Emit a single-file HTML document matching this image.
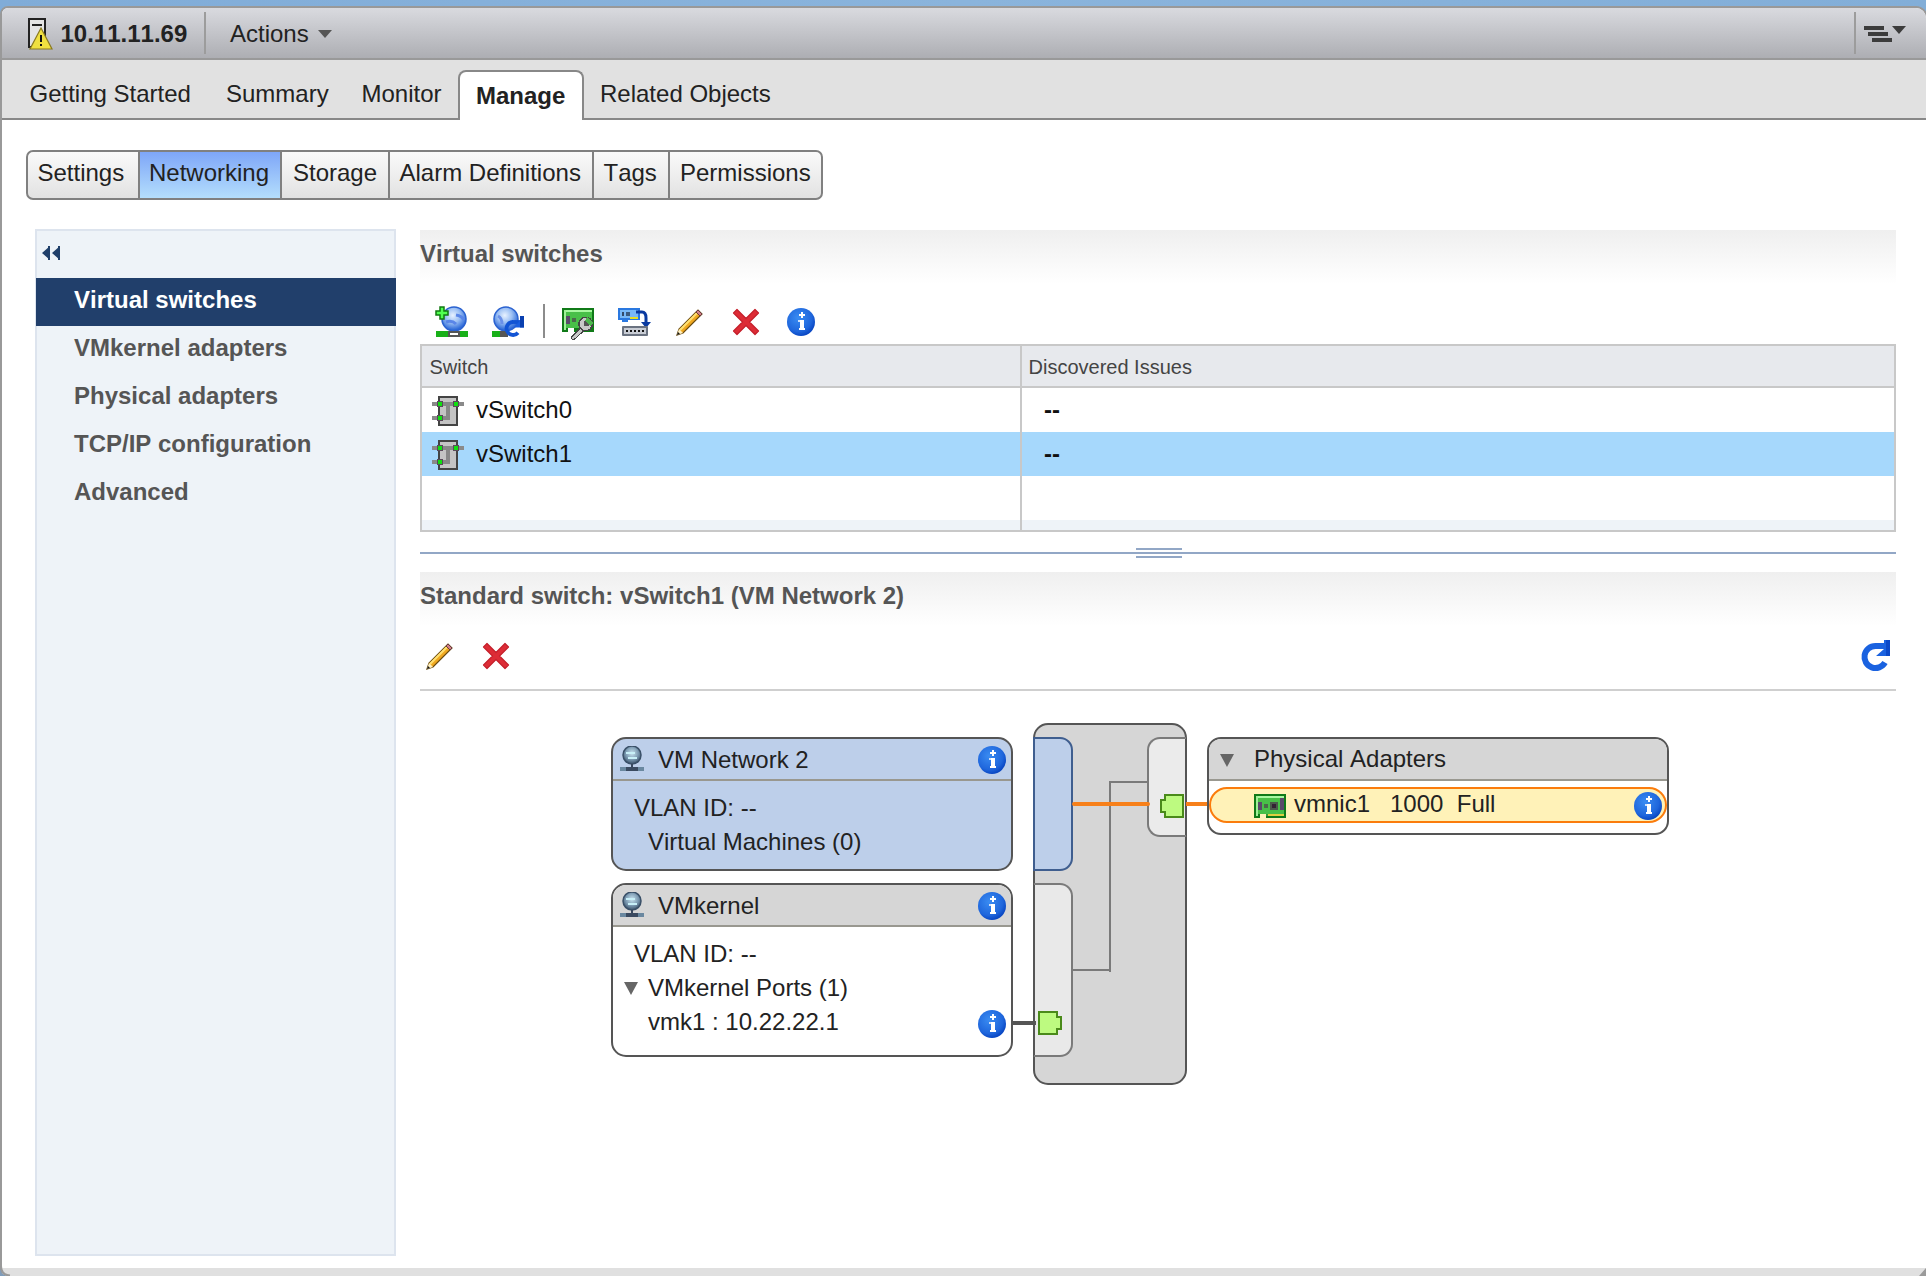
<!DOCTYPE html>
<html><head><meta charset="utf-8">
<style>
*{margin:0;padding:0;box-sizing:border-box}
html,body{width:1926px;height:1276px;overflow:hidden;background:#fff;font-family:"Liberation Sans",sans-serif;color:#222}
.a{position:absolute}
.t{position:absolute;line-height:1;white-space:nowrap;font-size:24px;font-kerning:none}
.b{font-weight:bold}
svg{position:absolute;overflow:visible}
</style></head><body>
<!-- top blue strip -->
<div class="a" style="left:0;top:0;width:1926px;height:20px;background:linear-gradient(90deg,#80acd8,#8ab4dc 50%,#82aed8)"></div>
<!-- main frame left border -->
<div class="a" style="left:0;top:6px;width:1928px;height:1290px;border:2px solid #999;border-radius:8px 12px 0 0;background:#fff"></div>
<!-- header -->
<div class="a" style="left:2px;top:8px;width:1924px;height:50px;border-radius:6px 10px 0 0;background:linear-gradient(#d9dadf,#adaeb3)"></div>
<div class="a" style="left:2px;top:58px;width:1924px;height:2px;background:#999"></div>
<div class="a" style="left:204px;top:12px;width:2px;height:42px;background:#9c9c9c"></div>
<div class="a" style="left:1854px;top:12px;width:2px;height:42px;background:#9c9c9c"></div>
<div class="t b" style="left:60.5px;top:21.5px">10.11.11.69</div>
<div class="t" style="left:230px;top:21.7px">Actions</div>
<svg style="left:318px;top:30px" width="14" height="8"><path d="M0 0H14L7 8Z" fill="#555"/></svg>
<!-- menu icon -->
<div class="a" style="left:1864px;top:26px;width:20px;height:4px;background:#3c3c3c"></div>
<div class="a" style="left:1868px;top:32px;width:20px;height:4px;background:#3c3c3c"></div>
<div class="a" style="left:1872px;top:38px;width:20px;height:4px;background:#3c3c3c"></div>
<svg style="left:1892px;top:26px" width="14" height="8"><path d="M0 0H14L7 8Z" fill="#3c3c3c"/></svg>

<!-- tab bar -->
<div class="a" style="left:2px;top:60px;width:1924px;height:58px;background:#e1e1e1"></div>
<div class="a" style="left:2px;top:118px;width:1924px;height:2px;background:#888"></div>
<div class="a" style="left:458px;top:70px;width:126px;height:50px;background:#fff;border:2px solid #888;border-bottom:none;border-radius:8px 8px 0 0"></div>
<div class="t" style="left:29.5px;top:81.7px">Getting Started</div>
<div class="t" style="left:226px;top:81.7px">Summary</div>
<div class="t" style="left:361.5px;top:81.7px">Monitor</div>
<div class="t b" style="left:476px;top:83.7px">Manage</div>
<div class="t" style="left:600px;top:81.7px">Related Objects</div>

<!-- button bar -->
<div class="a" style="left:26px;top:150px;width:797px;height:50px;border:2px solid #808080;border-radius:7px;background:linear-gradient(#fafafa,#e2e2e2);overflow:hidden">
 <div class="a" style="left:110px;top:0;width:144px;height:46px;background:linear-gradient(#7ea6f8,#b4defc);border-left:2px solid #808080;border-right:2px solid #808080"></div>
 <div class="a" style="left:360px;top:0;width:2px;height:46px;background:#808080"></div>
 <div class="a" style="left:564px;top:0;width:2px;height:46px;background:#808080"></div>
 <div class="a" style="left:640px;top:0;width:2px;height:46px;background:#808080"></div>
</div>
<div class="t" style="left:37.5px;top:160.5px">Settings</div>
<div class="t" style="left:149px;top:160.5px">Networking</div>
<div class="t" style="left:293px;top:160.5px">Storage</div>
<div class="t" style="left:399.5px;top:160.5px">Alarm Definitions</div>
<div class="t" style="left:603.5px;top:160.5px">Tags</div>
<div class="t" style="left:680px;top:160.5px">Permissions</div>

<!-- sidebar -->
<div class="a" style="left:35px;top:229px;width:361px;height:1027px;background:#eef3f8;border:2px solid #dde4ee"></div>
<div class="a" style="left:36px;top:278px;width:360px;height:48px;background:#213f6b"></div>
<svg style="left:41px;top:245px" width="21" height="16"><path d="M1 8L9 1V15Z M11 8L19 1V15Z" fill="#1f3f6a"/><rect x="7" y="1" width="2" height="14" fill="#1f3f6a"/><rect x="17" y="1" width="2" height="14" fill="#1f3f6a"/></svg>
<div class="t b" style="left:74px;top:287.7px;color:#fff">Virtual switches</div>
<div class="t b" style="left:74px;top:335.7px;color:#555">VMkernel adapters</div>
<div class="t b" style="left:74px;top:383.7px;color:#555">Physical adapters</div>
<div class="t b" style="left:74px;top:431.7px;color:#555">TCP/IP configuration</div>
<div class="t b" style="left:74px;top:479.7px;color:#555">Advanced</div>

<!-- bottom bar -->
<div class="a" style="left:2px;top:1268px;width:1924px;height:8px;background:#e0e0e0"></div>

<!-- Virtual switches header -->
<div class="a" style="left:420px;top:230px;width:1476px;height:54px;background:linear-gradient(#efefef,#fff)"></div>
<div class="t b" style="left:420px;top:241.7px;color:#555">Virtual switches</div>
<div class="a" style="left:543px;top:304px;width:2px;height:34px;background:#8c8c8c"></div>

<!-- table -->
<div class="a" style="left:420px;top:344px;width:1476px;height:188px;border:2px solid #c8c8c8;background:#fff"></div>
<div class="a" style="left:422px;top:346px;width:1472px;height:40px;background:#e7e9ed"></div>
<div class="a" style="left:422px;top:386px;width:1472px;height:2px;background:#c8c8c8"></div>
<div class="a" style="left:422px;top:432px;width:1472px;height:44px;background:#a6d8fc"></div>
<div class="a" style="left:422px;top:520px;width:1472px;height:10px;background:#eef3f8"></div>
<div class="a" style="left:1020px;top:346px;width:2px;height:184px;background:#c8c8c8"></div>
<div class="t" style="left:429.5px;top:356.5px;font-size:20px;color:#444">Switch</div>
<div class="t" style="left:1028.5px;top:356.5px;font-size:20px;color:#444">Discovered Issues</div>
<div class="t" style="left:476px;top:397.7px;color:#111">vSwitch0</div>
<div class="t" style="left:476px;top:441.7px;color:#111">vSwitch1</div>
<div class="t b" style="left:1044px;top:397.7px;color:#111">--</div>
<div class="t b" style="left:1044px;top:441.7px;color:#111">--</div>

<!-- splitter -->
<div class="a" style="left:420px;top:552px;width:1476px;height:2px;background:#92a7c6"></div>
<div class="a" style="left:1136px;top:548px;width:46px;height:2px;background:#92a7c6"></div>
<div class="a" style="left:1136px;top:556px;width:46px;height:2px;background:#92a7c6"></div>

<!-- Standard switch header -->
<div class="a" style="left:420px;top:572px;width:1476px;height:54px;background:linear-gradient(#efefef,#fff)"></div>
<div class="t b" style="left:420px;top:583.7px;color:#555">Standard switch: vSwitch1 (VM Network 2)</div>
<div class="a" style="left:420px;top:689px;width:1476px;height:2px;background:#cfcfcf"></div>

<!-- diagram: switch outer -->
<div class="a" style="left:1033px;top:723px;width:154px;height:362px;background:#d6d6d6;border:2px solid #555;border-radius:15px"></div>
<div class="a" style="left:1033px;top:737px;width:40px;height:134px;background:#bdcfea;border:2px solid #3f5e8f;border-radius:0 13px 13px 0"></div>
<div class="a" style="left:1033px;top:883px;width:40px;height:174px;background:#e9e9e9;border:2px solid #7a7a7a;border-left-color:#555;border-radius:0 13px 13px 0"></div>
<div class="a" style="left:1147px;top:737px;width:40px;height:100px;background:#ebebeb;border:2px solid #7a7a7a;border-right-color:#555;border-radius:13px 0 0 13px"></div>
<!-- gray tree lines -->
<div class="a" style="left:1109px;top:781px;width:2px;height:191px;background:#7a7a7a"></div>
<div class="a" style="left:1109px;top:781px;width:39px;height:2px;background:#7a7a7a"></div>
<div class="a" style="left:1072px;top:969px;width:39px;height:2px;background:#7a7a7a"></div>
<!-- orange lines -->
<div class="a" style="left:1072px;top:802px;width:78px;height:4px;background:#f7801a;border-radius:2px"></div>
<div class="a" style="left:1186px;top:802px;width:24px;height:4px;background:#f7801a"></div>
<!-- dark connector -->
<div class="a" style="left:1012px;top:1021px;width:24px;height:4px;background:#555"></div>
<!-- green ports -->
<svg style="left:1160px;top:794px" width="24" height="24"><path d="M5 1H23V23H5V18H1V6H5Z" fill="#bdfa80" stroke="#4a8a1a" stroke-width="2"/></svg>
<svg style="left:1038px;top:1011px" width="24" height="24"><path d="M1 1H19V6H23V18H19V23H1Z" fill="#bdfa80" stroke="#4a8a1a" stroke-width="2"/></svg>

<!-- VM Network 2 box -->
<div class="a" style="left:611px;top:737px;width:402px;height:134px;background:#bdcfea;border:2px solid #555;border-radius:15px"></div>
<div class="a" style="left:613px;top:779px;width:398px;height:2px;background:#999890"></div>
<div class="t" style="left:658px;top:747.7px">VM Network 2</div>
<div class="t" style="left:634px;top:795.7px">VLAN ID: --</div>
<div class="t" style="left:648px;top:829.7px">Virtual Machines (0)</div>

<!-- VMkernel box -->
<div class="a" style="left:611px;top:883px;width:402px;height:174px;background:#fff;border:2px solid #555;border-radius:15px;overflow:hidden"><div class="a" style="left:0;top:0;width:398px;height:42px;background:#d6d6d6;border-bottom:2px solid #999890"></div></div>
<div class="t" style="left:658px;top:893.7px">VMkernel</div>
<div class="t" style="left:634px;top:941.7px">VLAN ID: --</div>
<svg style="left:624px;top:982px" width="14" height="13"><path d="M0 0H14L7 13Z" fill="#666"/></svg>
<div class="t" style="left:648px;top:975.7px">VMkernel Ports (1)</div>
<div class="t" style="left:648px;top:1009.7px">vmk1 : 10.22.22.1</div>

<!-- Physical adapters box -->
<div class="a" style="left:1207px;top:737px;width:462px;height:98px;background:#fff;border:2px solid #555;border-radius:14px;overflow:hidden"><div class="a" style="left:0;top:0;width:458px;height:42px;background:#d6d6d6;border-bottom:2px solid #999890"></div></div>
<svg style="left:1220px;top:754px" width="14" height="13"><path d="M0 0H14L7 13Z" fill="#666"/></svg>
<div class="t" style="left:1254px;top:746.7px">Physical Adapters</div>
<div class="a" style="left:1209px;top:787px;width:458px;height:36px;background:#fff2b8;border:2.5px solid #fb7c0c;border-radius:18px"></div>
<div class="t" style="left:1294px;top:791.8px;white-space:pre">vmnic1   1000  Full</div>

<!-- ICON DEFS -->
<svg width="0" height="0" style="left:0;top:0">
<defs>
 <radialGradient id="gInfo" cx="40%" cy="35%" r="65%"><stop offset="0" stop-color="#3a8cf2"/><stop offset="0.75" stop-color="#1f66dc"/><stop offset="1" stop-color="#0a48c4"/></radialGradient>
 <radialGradient id="gGlobe" cx="45%" cy="35%" r="60%"><stop offset="0" stop-color="#e8f2ff"/><stop offset="0.5" stop-color="#9cc0f4"/><stop offset="1" stop-color="#2e6ad8"/></radialGradient>
 <radialGradient id="gGlobe2" cx="50%" cy="40%" r="60%"><stop offset="0" stop-color="#c8e4f0"/><stop offset="0.6" stop-color="#7a98b0"/><stop offset="1" stop-color="#3a5068"/></radialGradient>
 <symbol id="info" viewBox="0 0 28 28">
  <circle cx="14" cy="14" r="14" fill="url(#gInfo)"/>
  <rect x="12" y="6" width="6" height="2" fill="#fff"/><rect x="14" y="4" width="2" height="6" fill="#fff"/>
  <rect x="13" y="12" width="4" height="9" fill="#fff"/><rect x="11" y="12" width="2" height="2" fill="#cfe0fa"/><rect x="12" y="20" width="6" height="2" fill="#fff"/>
 </symbol>
 <symbol id="pencil" viewBox="0 0 28 28">
  <path d="M1 27 L3 21 L22 2 L26 6 L7 25 Z" fill="#f0a820" stroke="#6a4a10" stroke-width="1.2"/>
  <path d="M4 22 L21 5" stroke="#ffe070" stroke-width="2.2"/>
  <path d="M20 4 L22 2 L26 6 L24 8 Z" fill="#d08088" stroke="#6a3a3a" stroke-width="1"/>
  <path d="M1 27 L3 21 L7 25 Z" fill="#fff0c0"/><path d="M1 27 L2 24 L4 26Z" fill="#111"/>
 </symbol>
 <symbol id="xred" viewBox="0 0 28 28">
  <path d="M1.5 5 L5 1.5 L14 10.5 L23 1.5 L26.5 5 L17.5 14 L26.5 23 L23 26.5 L14 17.5 L5 26.5 L1.5 23 L10.5 14 Z" fill="#dd2c36" stroke="#c41e2a" stroke-width="1.2" stroke-linejoin="round"/>
 </symbol>
 <symbol id="sw" viewBox="0 0 16 16" shape-rendering="crispEdges">
  <rect x="3" y="1" width="10" height="15" fill="#444"/><rect x="4" y="2" width="8" height="13" fill="#c4c4c4"/>
  <rect x="5" y="4" width="6" height="2" fill="#888"/><rect x="7" y="6" width="2" height="7" fill="#888"/><rect x="5" y="11" width="4" height="2" fill="#888"/>
  <rect x="0" y="4" width="3" height="2" fill="#8a8a8a"/><rect x="13" y="4" width="3" height="2" fill="#8a8a8a"/><rect x="0" y="11" width="3" height="2" fill="#8a8a8a"/>
  <rect x="2.5" y="3.5" width="3" height="3" fill="#5a4a5a"/><rect x="10.5" y="3.5" width="3" height="3" fill="#5a4a5a"/><rect x="2.5" y="10.5" width="3" height="3" fill="#5a4a5a"/>
  <rect x="3" y="4" width="2" height="2" fill="#10e010"/><rect x="11" y="4" width="2" height="2" fill="#10e010"/><rect x="3" y="11" width="2" height="2" fill="#10e010"/>
 </symbol>
 <symbol id="nic" viewBox="0 0 16 12" shape-rendering="crispEdges">
  <path d="M0 0H16V12H6V10H3V12H0Z" fill="#107a18"/>
  <rect x="1" y="1" width="14" height="9" fill="#48c048"/><rect x="6" y="10" width="9" height="1" fill="#3a9a30"/>
  <rect x="1" y="1" width="14" height="1" fill="#a8f8a0"/><rect x="1" y="1" width="1" height="10" fill="#a0f098"/>
  <rect x="2" y="4" width="2" height="4" fill="#5a4a6a"/><rect x="5" y="5" width="2" height="2" fill="#4a6a4a"/>
  <rect x="8" y="4" width="4" height="4" fill="#4a5a4a"/><rect x="9" y="5" width="2" height="2" fill="#332233"/><rect x="13" y="2" width="2" height="6" fill="#5a4a6a"/>
  <rect x="7" y="10" width="8" height="1" fill="#e0d040"/>
 </symbol>
 <symbol id="netg" viewBox="0 0 24 26">
  <circle cx="12" cy="9" r="9" fill="url(#gGlobe2)" stroke="#3a5068" stroke-width="1.5"/>
  <path d="M6 7 H15 M8 12 H17" stroke="#c8f0f8" stroke-width="2"/>
  <rect x="11" y="18" width="2" height="4" fill="#3a4a60"/>
  <rect x="0" y="21" width="24" height="4" fill="#6a88a0"/><rect x="6" y="21" width="12" height="4" fill="#3a4a60"/>
 </symbol>
</defs></svg>

<!-- header host warning icon -->
<svg style="left:28px;top:18px" width="26" height="32" viewBox="0 0 26 32">
 <rect x="1" y="1" width="16" height="28" fill="#e4e4e4" stroke="#222" stroke-width="2"/>
 <rect x="4" y="6" width="10" height="2" fill="#222"/>
 <path d="M13 10 L24 31 L2 31 Z" fill="#f0e040" stroke="#8a7a20" stroke-width="1.2"/>
 <rect x="12" y="17" width="2" height="7" fill="#111"/><rect x="12" y="26" width="2" height="2" fill="#111"/>
</svg>

<!-- toolbar 1 icons -->
<svg style="left:436px;top:306px" width="32" height="32" viewBox="0 0 32 32">
 <circle cx="18" cy="13" r="12" fill="url(#gGlobe)" stroke="#2a62d0" stroke-width="1.5"/>
 <path d="M10 16 Q16 14 20 18 M20 9 Q26 10 28 14" stroke="#5a86e8" stroke-width="3" fill="none"/>
 <rect x="0" y="25" width="32" height="6" fill="#18b018"/><rect x="12" y="25" width="12" height="6" fill="#555"/><rect x="14" y="27" width="8" height="2" fill="#fff"/>
 <path d="M4 1H8V5H12V9H8V13H4V9H0V5H4Z" fill="#50ff50" stroke="#107a10" stroke-width="1.5"/>
</svg>
<svg style="left:492px;top:306px" width="32" height="32" viewBox="0 0 32 32">
 <circle cx="14" cy="13" r="12" fill="url(#gGlobe)" stroke="#2a62d0" stroke-width="1.5"/>
 <path d="M6 10 Q10 12 10 18" stroke="#6a90e8" stroke-width="3" fill="none"/>
 <rect x="0" y="25" width="10" height="6" fill="#18b018"/><rect x="8" y="25" width="8" height="6" fill="#555"/>
 <path d="M21 16 A6.5 6.5 0 1 0 26 26.7" stroke="#1254d4" stroke-width="3.8" fill="none"/><rect x="20" y="14.1" width="9" height="3.8" fill="#1254d4"/>
 <path d="M22 21.5 H32 V10 Z" fill="#1a5ee0"/><rect x="28" y="10" width="4" height="11.5" fill="#0a40b0"/>
</svg>
<svg style="left:562px;top:308px" width="32" height="32" viewBox="0 0 16 16" shape-rendering="crispEdges">
 <path d="M0 0H16V12H6V10H3V12H0Z" fill="#107a18"/><rect x="1" y="1" width="14" height="9" fill="#48c048"/><rect x="1" y="1" width="14" height="1" fill="#a8f8a0"/><rect x="1" y="1" width="1" height="10" fill="#a0f098"/>
 <rect x="2" y="4" width="2" height="4" fill="#5a4a6a"/><rect x="5" y="5" width="2" height="2" fill="#4a6a4a"/>
 <path d="M5.7 14.8 L10.5 10.3" stroke="#444" stroke-width="2.6" stroke-linecap="round"/><path d="M5.7 14.8 L10.5 10.3" stroke="#c8c8c8" stroke-width="1.4" stroke-linecap="round"/>
 <circle cx="11.8" cy="8" r="3.4" fill="#c8c8c8" stroke="#444" stroke-width="0.7"/><circle cx="12.3" cy="7.6" r="1.5" fill="#555"/><path d="M12.5 4.5 L15.5 7.5 L14 9 L11.5 6.5Z" fill="#4cb84c"/>
</svg>
<svg style="left:618px;top:308px" width="32" height="28" viewBox="0 0 32 28">
 <path d="M0 0H22V12H10V14H4V12H0Z" fill="#2a78e0"/><rect x="2" y="2" width="18" height="8" fill="#78b8f8"/><rect x="4" y="4" width="2" height="4" fill="#334a6a"/><rect x="8" y="4" width="4" height="4" fill="#3a5a80"/><rect x="12" y="9" width="8" height="2" fill="#e8e020"/>
 <path d="M18 4 H24 Q28 4 28 10 V16" stroke="#0a3aa0" stroke-width="3" fill="none"/><path d="M23 14 H33 L28 20Z" fill="#0a3aa0"/>
 <rect x="4" y="18" width="26" height="10" rx="1" fill="#6a7280"/><rect x="6" y="20" width="22" height="6" fill="#c8ccd4"/>
 <rect x="8" y="22" width="2" height="2" fill="#111"/><rect x="12" y="22" width="2" height="2" fill="#111"/><rect x="16" y="22" width="2" height="2" fill="#111"/><rect x="20" y="22" width="2" height="2" fill="#111"/><rect x="24" y="22" width="2" height="2" fill="#111"/>
</svg>
<svg style="left:676px;top:308px" width="28" height="28"><use href="#pencil"/></svg>
<svg style="left:732px;top:308px" width="28" height="28"><use href="#xred"/></svg>
<svg style="left:787px;top:308px" width="28" height="28"><use href="#info"/></svg>

<!-- table switch icons -->
<svg style="left:432px;top:394px" width="32" height="32"><use href="#sw"/></svg>
<svg style="left:432px;top:438px" width="32" height="32"><use href="#sw"/></svg>

<!-- toolbar 2 -->
<svg style="left:426px;top:642px" width="28" height="28"><use href="#pencil"/></svg>
<svg style="left:482px;top:642px" width="28" height="28"><use href="#xred"/></svg>
<svg style="left:1860px;top:638px" width="32" height="34" viewBox="0 0 32 34">
 <path d="M15.5 8 A11 11 0 1 0 25 24.5" stroke="#1a62e0" stroke-width="6" fill="none"/>
 <rect x="15" y="5" width="15" height="6" fill="#1a62e0"/>
 <path d="M16 18 H30 V2 H24 V11 Z" fill="#1a62e0"/><rect x="26" y="2" width="4" height="16" fill="#0a48c8"/>
</svg>

<!-- diagram icons -->
<svg style="left:620px;top:746px" width="24" height="26"><use href="#netg"/></svg>
<svg style="left:620px;top:892px" width="24" height="26"><use href="#netg"/></svg>
<svg style="left:978px;top:746px" width="28" height="28"><use href="#info"/></svg>
<svg style="left:978px;top:892px" width="28" height="28"><use href="#info"/></svg>
<svg style="left:978px;top:1010px" width="28" height="28"><use href="#info"/></svg>
<svg style="left:1634px;top:792px" width="28" height="28"><use href="#info"/></svg>
<svg style="left:1254px;top:794px" width="32" height="24"><use href="#nic"/></svg>

<svg style="left:0;top:1266px" width="10" height="10"><path d="M0 0 Q0 10 10 10 H0Z" fill="#7f9cba"/><path d="M1 0 Q1 9 10 9.5" stroke="#999" stroke-width="2" fill="none"/></svg>
<svg style="left:1916px;top:1268px" width="10" height="8"><path d="M10 0 V8 H3Z" fill="#9a9a9a"/></svg>

</body></html>
